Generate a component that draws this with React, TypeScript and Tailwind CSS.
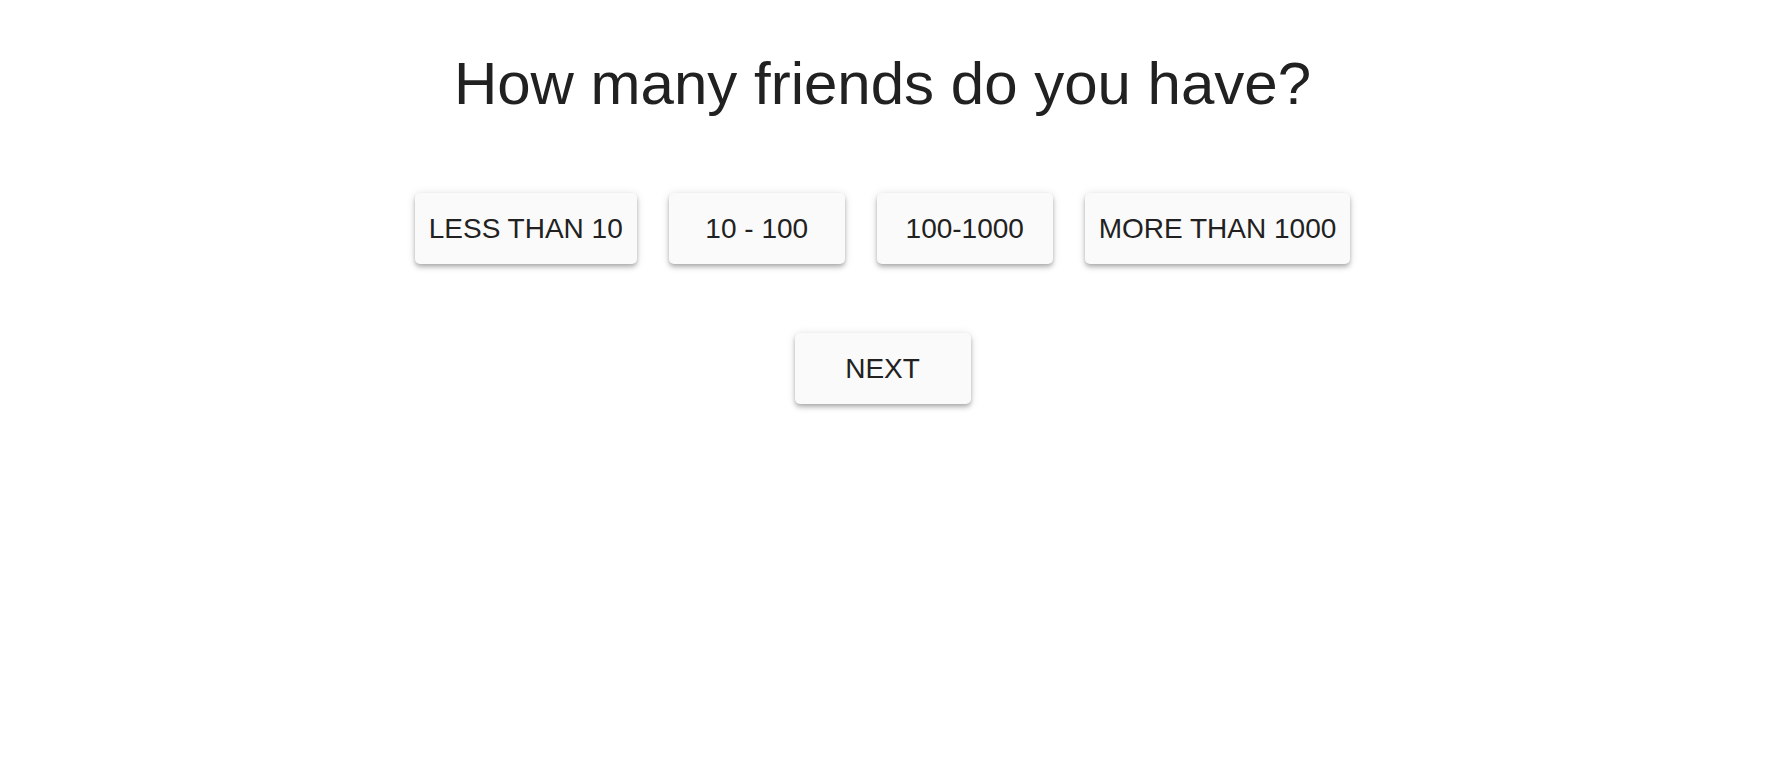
import React from "react";

const btn =
  "h-[71px] min-w-[176px] px-[14px] rounded-[5px] bg-[#fafafa] text-[#212121] text-[28px] leading-none flex items-center justify-center shadow-[0px_2px_4px_-1px_rgba(0,0,0,0.2),0px_4px_5px_0px_rgba(0,0,0,0.14),0px_1px_10px_0px_rgba(0,0,0,0.12)]";

export default function App() {
  const options = ["LESS THAN 10", "10 - 100", "100-1000", "MORE THAN 1000"];
  return (
    <div
      className="w-[1765px] min-h-[774px] bg-white flex flex-col items-center pt-[48px]"
      style={{ fontFamily: '"Liberation Sans", Arial, sans-serif' }}
    >
      <h1 className="text-[60px] leading-[72px] font-normal text-[#212121] m-0">
        How many friends do you have?
      </h1>
      <div className="flex gap-[32px] mt-[73px]">
        {options.map((o) => (
          <button key={o} className={btn}>
            {o}
          </button>
        ))}
      </div>
      <div className="mt-[69px]">
        <button className={btn}>NEXT</button>
      </div>
    </div>
  );
}
